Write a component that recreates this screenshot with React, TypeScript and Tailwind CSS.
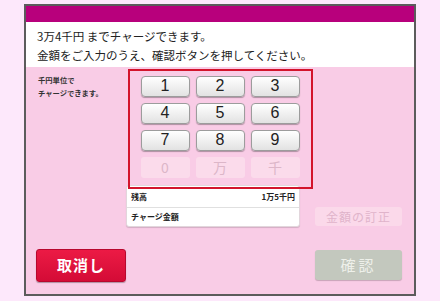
import React from 'react';

const jp = { fontFamily: '"Noto Sans CJK JP", "Noto Sans", sans-serif' };
const num = { fontFamily: '"Liberation Sans", "Noto Sans CJK JP", sans-serif' };

const keys = ['1', '2', '3', '4', '5', '6', '7', '8', '9'];
const disabledKeys = ['0', '万', '千'];

export default function App() {
  return (
    <div className="w-[440px] h-[301px] bg-[#fde8fb] pt-[4px] pl-[24px]" style={jp}>
      <div className="w-[392px] h-[292px] border-2 border-[#5c5c5c] flex flex-col">
        {/* Title bar */}
        <div className="h-[16px] bg-[#b8007c]" />

        {/* Message */}
        <div className="h-[45px] bg-white pl-[11px] pt-[5px] text-[11.5px] leading-[19px] text-[#222]">
          <p>3万4千円 までチャージできます。</p>
          <p>金額をご入力のうえ、確認ボタンを押してください。</p>
        </div>

        {/* Body */}
        <div className="flex-1 bg-[#f9cce6] flex px-[11px] pt-[2px]">
          {/* Left column */}
          <div className="w-[91px] flex flex-col pb-[12px]">
            <p className="pt-[5px] pl-[1px] text-[7.3px] leading-[13px] font-bold text-[#333]">
              千円単位で<br />チャージできます。
            </p>
            <button className="mt-auto w-[90px] h-[33px] -ml-[1px] rounded-[3px] border border-[#b8072e] bg-gradient-to-b from-[#ec1a45] to-[#d40b36] shadow-[0_1px_1px_rgba(0,0,0,0.3)] text-white text-[15px] font-bold tracking-[1px]">
              取消し
            </button>
          </div>

          {/* Center column */}
          <div className="w-[185px] flex flex-col">
            <div className="relative z-10 h-[120px] border-[2.5px] border-[#d3142c] pt-[4.5px] pl-[10.5px]">
              <div className="grid grid-cols-[49px_49px_49px] gap-[6px]" style={num}>
                {keys.map((k) => (
                  <button
                    key={k}
                    className="h-[21px] rounded-[4px] border border-[#9c9c9c] bg-gradient-to-b from-white to-[#e2e2e2] shadow-[0_1px_1px_rgba(0,0,0,0.3)] text-[16px] leading-none text-[#222]"
                  >
                    {k}
                  </button>
                ))}
                {disabledKeys.map((k) => (
                  <button
                    key={k}
                    className="h-[21px] rounded-[3px] bg-[#fbdbeb] text-[14px] leading-none text-[#dcb6c8]"
                    style={jp}
                  >
                    {k}
                  </button>
                ))}
              </div>
            </div>
            <div className="-mt-[4px] -ml-[2px] w-[174px] bg-white rounded-[3px] border border-[#e2d6dc] shadow-[0_1px_1px_rgba(0,0,0,0.15)] text-[8px] font-bold text-[#222]">
              <div className="h-[22px] flex items-end justify-between px-[4px] pb-[4px] border-b border-[#e0e0e0]">
                <span>残高</span>
                <span>1万5千円</span>
              </div>
              <div className="h-[18px] flex items-center px-[4px]">
                <span>チャージ金額</span>
              </div>
            </div>
          </div>

          {/* Right column */}
          <div className="flex flex-col pl-[2px] pt-[138px]">
            <button className="w-[87px] h-[19px] rounded-[3px] bg-[#fbd9ea] text-[12px] leading-none tracking-[1px] text-[#e0b4ca]">
              金額の訂正
            </button>
            <button className="mt-[24px] w-[87px] h-[30px] rounded-[3px] bg-[#c3c8be] shadow-[0_1px_1px_rgba(0,0,0,0.2)] text-[15px] tracking-[3px] text-[#eef0ea]">
              確認
            </button>
          </div>
        </div>
      </div>
    </div>
  );
}
